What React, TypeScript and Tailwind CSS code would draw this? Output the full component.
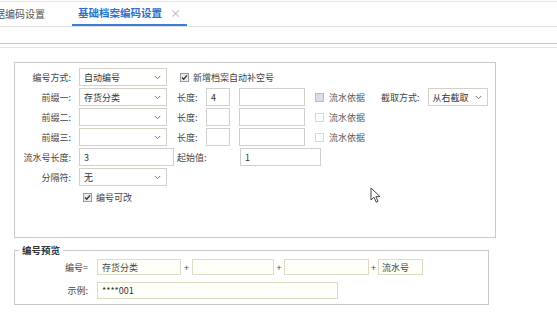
import React from 'react';

const font = { fontFamily: '"Noto Sans CJK SC", "Noto Sans", sans-serif' };

function Chevron() {
  return (
    <svg width="7" height="5" viewBox="0 0 7 5" className="shrink-0">
      <path d="M0.8 1 L3.5 3.8 L6.2 1" fill="none" stroke="#777" strokeWidth="1" />
    </svg>
  );
}

function Select({ value, w = 'w-[88px]' }: { value?: string; w?: string }) {
  return (
    <div className={`${w} h-[18px] border border-[#d3d1c6] bg-white flex items-center justify-between pl-[4px] pr-[5px] text-[#333]`}>
      <span>{value}</span>
      <Chevron />
    </div>
  );
}

function Input({ value, w }: { value?: string; w: string }) {
  return (
    <div className={`${w} h-[18px] border border-[#cfcfcf] bg-white flex items-center pl-[4px] text-[#333]`}>
      {value}
    </div>
  );
}

function Check({ checked, tone }: { checked?: boolean; tone?: 'filled' | 'empty' }) {
  if (checked) {
    return (
      <svg width="9" height="9" viewBox="0 0 9 9" className="shrink-0">
        <rect x="0.5" y="0.5" width="8" height="8" fill="#ececec" stroke="#9a9a9a" />
        <path d="M2 4.6 L3.7 6.3 L7 2.4" fill="none" stroke="#333" strokeWidth="1.4" />
      </svg>
    );
  }
  return (
    <svg width="9" height="9" viewBox="0 0 9 9" className="shrink-0">
      <rect
        x="0.5"
        y="0.5"
        width="8"
        height="8"
        fill={tone === 'filled' ? '#dcdce8' : '#ffffff'}
        stroke={tone === 'filled' ? '#b8b8c8' : '#d6d6d6'}
      />
    </svg>
  );
}

function Label({ text }: { text: string }) {
  return <div className="w-[56px] text-right text-[#444] shrink-0">{text}</div>;
}

function PrefixRow({ label, value, extra }: { label: string; value?: string; extra?: boolean }) {
  return (
    <div className="h-[20px] flex items-center">
      <Label text={label} />
      <div className="ml-[8px]">
        <Select value={value} />
      </div>
      <span className="ml-[10px] text-[#444] w-[29px]">长度:</span>
      <Input value={value ? '4' : ''} w="w-[24px]" />
      <div className="ml-[9px]">
        <Input w="w-[66px]" />
      </div>
      <div className="ml-[10px]">
        <Check tone={extra ? 'filled' : 'empty'} />
      </div>
      <span className="ml-[5px] text-[#555]">流水依据</span>
      {extra && (
        <>
          <span className="ml-[16px] text-[#444]">截取方式:</span>
          <div className="ml-[8px]">
            <Select value="从右截取" w="w-[60px]" />
          </div>
        </>
      )}
    </div>
  );
}

function Cursor() {
  return (
    <svg width="12" height="17" viewBox="0 0 12 17" className="absolute left-[370px] top-[187px]">
      <path d="M1 1 L1 13 L4 10.2 L6.2 15.2 L8 14.4 L5.9 9.6 L10 9.6 Z" fill="#fff" stroke="#333" strokeWidth="0.9" strokeLinejoin="round" />
    </svg>
  );
}

export default function App() {
  return (
    <div className="relative w-[557px] h-[334px] bg-white overflow-hidden text-[9px] leading-none" style={font}>
      {/* tab strip */}
      <div className="pt-px">
        <div className="h-[26px] border-t border-b border-t-[#e6e6e6] border-b-[#dedede] flex">
          <div className="w-[72px] h-full flex items-center overflow-hidden">
            <span className="ml-[-15px] text-[10px] text-[#555] whitespace-nowrap">单据编码设置</span>
          </div>
          <div className="w-[115px] h-full border-b-2 border-[#3b7dd8] flex items-center pl-[6px]">
            <span className="text-[10.5px] font-bold text-[#2f6fc9] whitespace-nowrap">基础档案编码设置</span>
            <span className="ml-[8px] text-[11px] text-[#b0b0b0]">×</span>
          </div>
        </div>
      </div>
      {/* toolbar */}
      <div className="h-[17px] border-b border-[#c6ccd2]" />
      <div className="mt-[3px] border-t border-[#e2e6ea]" />

      {/* settings box */}
      <div className="ml-[14px] mt-[14px] w-[482px] h-[176px] border border-[#cacaca] pt-[4px]">
        <div className="h-[20px] flex items-center">
          <Label text="编号方式:" />
          <div className="ml-[8px]">
            <Select value="自动编号" />
          </div>
          <div className="ml-[13px]">
            <Check checked />
          </div>
          <span className="ml-[4px] text-[#444]">新增档案自动补空号</span>
        </div>
        <PrefixRow label="前缀一:" value="存货分类" extra />
        <PrefixRow label="前缀二:" />
        <PrefixRow label="前缀三:" />
        <div className="h-[20px] flex items-center">
          <Label text="流水号长度:" />
          <div className="ml-[8px]">
            <Input value="3" w="w-[95px]" />
          </div>
          <span className="ml-[3px] w-[63px] text-[#444]">起始值:</span>
          <Input value="1" w="w-[81px]" />
        </div>
        <div className="h-[20px] flex items-center">
          <Label text="分隔符:" />
          <div className="ml-[8px]">
            <Select value="无" />
          </div>
        </div>
        <div className="h-[20px] flex items-center pl-[68px]">
          <Check checked />
          <span className="ml-[4px] text-[#444]">编号可改</span>
        </div>
      </div>

      {/* preview */}
      <fieldset className="ml-[14px] mt-[6px] w-[475px] h-[61px] border border-[#cacaca]">
        <legend className="ml-[4px] px-[3px] text-[9.5px] font-bold text-[#333] leading-[13px]">编号预览</legend>
        <div className="flex items-center h-[16px] mt-[2px]">
          <div className="w-[73px] text-right text-[#444]">编号=</div>
          <div className="ml-[9px] w-[84px] h-[16px] border border-[#dedbc5] bg-[#fffffa] flex items-center pl-[4px] text-[#444]">存货分类</div>
          <span className="w-[11px] text-center text-[#444]">+</span>
          <div className="w-[82px] h-[16px] border border-[#dedbc5] bg-[#fffffa]" />
          <span className="w-[10px] text-center text-[#444]">+</span>
          <div className="w-[85px] h-[16px] border border-[#dedbc5] bg-[#fffffa]" />
          <span className="w-[9px] text-center text-[#444]">+</span>
          <div className="w-[45px] h-[16px] border border-[#dedbc5] bg-[#fffffa] flex items-center pl-[3px] text-[#444]">流水号</div>
        </div>
        <div className="flex items-center h-[17px] mt-[7px]">
          <div className="w-[73px] text-right text-[#444]">示例:</div>
          <div className="ml-[9px] w-[241px] h-[17px] border border-[#dedbc5] bg-[#fffffa] flex items-center pl-[4px] text-[#333]">****001</div>
        </div>
      </fieldset>

      <Cursor />
    </div>
  );
}
